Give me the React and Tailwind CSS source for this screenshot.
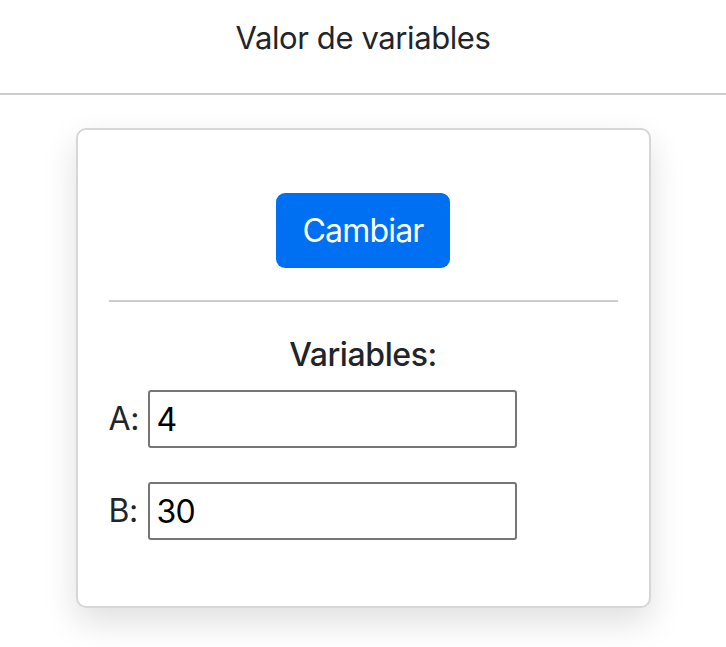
export default function App() {
  return (
    <div className="min-h-screen bg-white text-[#212529] tracking-tight" style={{ fontFamily: 'Inter, "Liberation Sans", sans-serif' }}>
      <header className="h-[93px] pt-[19px] text-center">
        <h1 className="text-[31px] leading-[38px] font-normal">Valor de variables</h1>
      </header>
      <div className="border-t-2 border-[#cccccc]" />

      <div className="mx-auto mt-[33px] w-[575px] rounded-[10px] border-2 border-[#d6d6d6] bg-white px-[31px] pt-[63px] pb-[66px] shadow-[0_14px_34px_rgba(0,0,0,0.13)]">
        <div className="flex justify-center">
          <button className="h-[75px] w-[174px] rounded-[9px] bg-[#0070f3] text-[32px] tracking-tight text-white">
            Cambiar
          </button>
        </div>

        <div className="mt-[32px] border-t-2 border-[#cccccc]" />

        <h2 className="mt-[35px] text-center text-[32px] leading-[36px] font-medium">Variables:</h2>

        <div className="mt-[17px] flex flex-col gap-[34px]">
          <Campo label="A:" value="4" />
          <Campo label="B:" value="30" />
        </div>
      </div>
    </div>
  )
}

function Campo({ label, value }) {
  return (
    <div className="flex items-center">
      <span className="w-[39px] shrink-0 text-[32px] leading-[36px]">{label}</span>
      <input
        readOnly
        value={value}
        className="h-[58px] w-[369px] rounded-[3px] border-2 border-[#767676] px-[7px] text-[32px] tracking-tight text-black outline-none"
      />
    </div>
  )
}
